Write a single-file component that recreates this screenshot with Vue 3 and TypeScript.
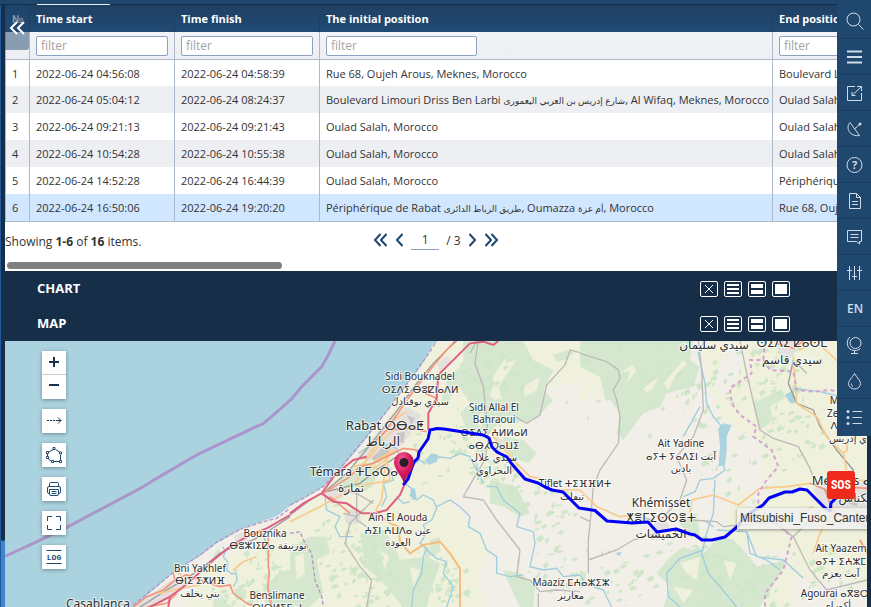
<script setup lang="ts">
import { ref } from 'vue'

interface Trip { start: string; finish: string; from: string; to: string }
interface Shape { k: string; d: string }
interface Sheet { x: number; shapes: Shape[] }
interface Label { x: number; y: number; s: string; t: string }

const trips: Trip[] = [
  { start: '2022-06-24 04:56:08', finish: '2022-06-24 04:58:39', from: 'Rue 68, Oujeh Arous, Meknes, Morocco', to: 'Boulevard Limouri Driss Ben Larbi, Meknes, Morocco' },
  { start: '2022-06-24 05:04:12', finish: '2022-06-24 08:24:37', from: 'Boulevard Limouri Driss Ben Larbi شارع إدريس بن العربي اليعمورى, Al Wifaq, Meknes, Morocco', to: 'Oulad Salah, Morocco' },
  { start: '2022-06-24 09:21:13', finish: '2022-06-24 09:21:43', from: 'Oulad Salah, Morocco', to: 'Oulad Salah, Morocco' },
  { start: '2022-06-24 10:54:28', finish: '2022-06-24 10:55:38', from: 'Oulad Salah, Morocco', to: 'Oulad Salah, Morocco' },
  { start: '2022-06-24 14:52:28', finish: '2022-06-24 16:44:39', from: 'Oulad Salah, Morocco', to: 'Périphérique de Rabat, Oumazza, Morocco' },
  { start: '2022-06-24 16:50:06', finish: '2022-06-24 19:20:20', from: 'Périphérique de Rabat طريق الرباط الدائرى, Oumazza أم عزة, Morocco', to: 'Rue 68, Oujeh Arous, Meknes, Morocco' },
]
const columns = ['Time start', 'Time finish', 'The initial position', 'End position']
const selected = ref(5)
const page = ref('1')
const panels = ['CHART', 'MAP']

// Odd parts are the Arabic runs, which are set in a smaller size.
const runs = (text: string): string[] => text.split(/([\u0600-\u06ff]+(?: [\u0600-\u06ff]+)*)/)

// Each map sheet covers 290 px and is digitised at three units per pixel.
const sheets: Sheet[] = [
  { x: 0, shapes: [
    { k: 'farm', d: 'M610 690L700 640L790 590L870 540V801H560Z' },
    { k: 'wood', d: 'M640 780L665 765L680 790L700 801H640ZM700 760L720 740L740 752L735 775L710 782ZM790 735L825 715L840 695L870 690V801H800L790 770ZM640 645L655 625L665 640L650 660ZM730 640L745 625L750 645L738 655Z' },
    { k: 'town', d: 'M400 801L450 765L500 730L540 705L560 725L530 760L480 790L450 801ZM700 590L730 575L745 600L715 615Z' },
    { k: 'river', d: 'M668 620L676 634L670 650L684 668L680 690L695 702L708 700L712 720L700 740M790 590L798 605' },
    { k: 'rail', d: 'M420 801L500 750L560 715L610 680L660 640L700 620L760 600L810 570L870 530' },
    { k: 'primary', d: 'M400 801L440 770L490 750L525 720L560 704L600 720L660 740L690 735L700 760L740 790L770 801M805 580V680L808 700L803 740L815 801M440 801L500 790L530 760M525 720L520 700' },
    { k: 'secondary', d: 'M480 760L540 745L600 735M700 690L730 665L770 650M520 690L545 705' },
    { k: 'motor', d: 'M450 801L510 770L545 745L580 715L640 660L690 620L740 590L800 565L870 525M510 770L505 801' },
    { k: 'border', d: 'M400 795L470 738L520 697L600 645L650 607L720 568L790 545L830 535L870 505' },
    { k: 'mark', d: 'M0 655L17 648L100 610L200 562L425 443L465 418L590 345L650 316L775 257L790 251L860 190L870 180' },
  ] },
  { x: 290, shapes: [
    { k: 'farm', d: 'M0 535L100 455L250 290L380 110L430 10H870V120L760 150L690 240L760 300L650 400L600 520L690 640L670 801H0Z' },
    { k: 'beige', d: 'M540 410L570 440L640 500L700 560L690 620L730 690L700 740L730 801H590L560 700L600 640L560 560L480 500ZM700 240L760 210L820 160L870 170V430L780 400L720 380Z' },
    { k: 'wood', d: 'M520 3H700L730 60L790 90L760 150L790 180L740 235L680 250L640 230L600 280L540 290L510 220L540 190L500 130L480 180L450 200L470 120L520 70ZM640 290L700 300L740 340L715 370L670 355L640 330ZM600 420L680 440L720 520L690 530L640 500L600 490ZM790 45L835 30L840 55L800 65ZM215 370L255 365L265 400L245 440L215 460L190 440L150 465L120 440L165 400ZM0 620L60 590L110 590L120 640L80 660L100 760L60 801H0ZM210 580L280 570L310 610L330 660L410 650L450 670L430 730L410 801H340L280 730L225 680ZM420 600L450 590L450 635L425 650ZM640 690L690 700L735 735L730 801H690L660 740ZM400 620L440 625L410 660Z' },
    { k: 'clear', d: 'M610 110L650 50L660 20L645 70L680 60L625 140L640 190L600 170ZM550 240L580 215L575 265ZM700 140L750 110L740 150L705 170ZM15 650L40 640L45 700L20 720ZM270 630L300 650L285 690ZM360 680L390 690L370 740Z' },
    { k: 'town', d: 'M200 355L245 300L290 240L350 200L395 225L360 285L310 345L260 365ZM90 460L140 430L180 455L140 485ZM440 70L475 45L485 65L450 95ZM160 520L205 505L215 545L175 550ZM610 285L640 300L625 330Z' },
    { k: 'citygrey', d: 'M245 355L285 315L300 335L265 370ZM320 280L345 275L340 310L325 305ZM350 225L375 235L365 255Z' },
    { k: 'lake', d: 'M405 360L425 340L445 345L440 365L415 375ZM360 450L375 445L380 475L368 480ZM515 280L530 285L520 300Z' },
    { k: 'river', d: 'M205 340L250 310L290 315L320 325L330 350L325 380L345 430L370 450L360 465L380 480L400 465L430 480L440 505L425 540L400 555L410 580L390 610L410 625L400 650L395 700L370 750L365 801M375 370L390 360L405 370M445 350L480 355L510 340L540 350L560 390L580 430M440 500L480 480L510 500L540 530L535 560L570 580L590 630L620 650L620 700L660 710L700 705M590 440L620 440L640 480L690 520L680 560L730 575L735 610L720 680L760 690L800 685L820 710L870 705M280 380L300 385L310 420L280 430L290 470L275 500M105 470L110 510L150 530L135 560L150 590L190 590M410 630L440 655L470 665L460 700L490 740L470 801M320 470L340 490L360 485M560 370L565 420' },
    { k: 'rail', d: 'M0 525L60 480L110 450L170 400L220 340L260 290L330 200L380 130L430 70L480 20L500 3M110 455L210 430L260 390L320 350' },
    { k: 'minor', d: 'M565 3L555 70L580 140L595 290M870 38L840 30L825 75L770 135L750 225L710 250L675 230M595 295L585 360L560 400L520 470L580 480L620 540L690 630L680 710L720 720L750 755L800 750L870 755M250 480L180 550L165 610L210 680L245 720L230 801M140 450L200 460L250 490M200 460L200 540L230 560M745 801V760M160 520L200 530M560 3L540 40' },
    { k: 'secondary', d: 'M0 545L90 500L180 450L215 400L260 360L315 330M200 440L300 420L290 360L310 300M290 340L275 480L258 510L275 530L300 550M610 290L640 325L680 370L720 410L750 415M800 450L870 450M190 400L240 350L280 300L340 240M210 390L260 380L300 350M190 380L230 370M225 360L310 240L350 215' },
    { k: 'trunk', d: 'M300 550L325 560L330 605L360 640L400 615L450 605L480 640L510 685V801' },
    { k: 'primary', d: 'M100 460L180 410L210 380L250 370L300 345L340 325L380 330L390 350M120 470L180 520M240 320L290 270L330 210L380 140L440 65L470 30L495 3M290 270L360 265L410 275M405 160L440 175L445 200' },
    { k: 'motor', d: 'M0 520L40 490L95 460L135 405L190 360L230 350M95 460L130 485L170 490L215 520L255 520L290 510L330 465L345 430M415 270L415 220L440 175L445 105L470 80L540 10L580 5L610 15L625 3' },
    { k: 'border', d: 'M0 495L40 475L100 440L150 385L200 325L250 265L300 200L340 145L380 90L410 50L440 3' },
    { k: 'border', d: 'M0 580L30 575L45 610L65 640L75 720L95 770L100 801' },
    { k: 'mark', d: 'M0 182L35 140L95 80L115 45L135 3' },
  ] },
  { x: 580, shapes: [
    { k: 'beige', d: 'M0 150L50 120L140 290L220 60L300 20L350 130L370 240L400 600L330 700L260 801H0Z' },
    { k: 'farm', d: 'M370 3H861V801H560L500 760L640 640L430 610L450 480L540 420L560 320L440 250L380 120Z' },
    { k: 'beige', d: 'M440 20L500 30L470 120L430 170L400 120ZM500 430L590 410L560 480L500 500ZM640 720L760 700L861 740V801H650Z' },
    { k: 'wood', d: 'M0 3H340L330 60L360 80L340 140L260 160L240 200L190 220L130 300L110 280L120 220L90 180L50 190L60 120L0 80ZM520 190L600 150L620 170L570 200L580 240L540 270ZM270 650L310 620L370 640L420 590L460 600L500 640L530 680L620 660L590 720L540 801H250L270 740L230 700ZM0 690L20 700L10 740L0 740ZM290 540L350 520L360 590L330 590ZM800 230L830 220L820 250Z' },
    { k: 'clear', d: 'M0 80L60 110L80 190L30 170L0 190ZM120 100L155 75L170 90L140 130L150 90ZM190 145L235 110L220 145L200 160ZM250 130L310 60L320 75L290 100L265 150ZM300 670L360 650L350 720L320 700ZM430 660L470 670L450 720ZM280 740L340 750L310 790Z' },
    { k: 'town', d: 'M700 450L740 420L861 430V530L800 510L730 500ZM220 545L250 535L270 560L235 580ZM590 3H650L640 50L610 60ZM790 100L805 110L795 120Z' },
    { k: 'citygrey', d: 'M730 450L760 440L750 480ZM800 470L840 470L830 500L805 490Z' },
    { k: 'lake', d: 'M415 265L430 250L455 255L440 290L440 330L435 375L415 380L420 320ZM105 640L125 635L120 648ZM615 165L640 150L645 190L630 190Z' },
    { k: 'river', d: 'M372 3L355 40L375 130L380 190L400 230L430 265M360 200L310 290M430 375L435 390L400 415L360 420L345 455L310 470M405 420L400 520L380 580L365 640L385 700L420 740L470 801M410 570L500 575L530 650L610 660L670 715M500 575L510 640L560 660L600 690M640 145L720 155L760 165L800 170L861 215M370 630L300 655L260 700L265 770L300 801M40 740L70 750L95 801M400 560L370 540M0 705L20 735' },
    { k: 'minor', d: 'M0 40L80 65L115 90L120 115L100 150L110 180L120 230L115 310L60 390L40 440L35 500L25 600V700M480 3L500 100L540 270L580 295L655 320L690 385L710 440M355 3L365 90L370 210L340 290L290 350L320 420L300 480L250 530M330 540L410 545L430 560L580 545L640 590L690 690L740 750L861 720M25 660L110 630L160 600L260 570M0 530L30 545M640 60L680 100M820 390L815 440M640 590L700 530L735 500M170 530L220 540' },
    { k: 'rail', d: 'M640 60L625 130L650 190L700 210L720 260L770 330L820 390V430' },
    { k: 'secondary', d: 'M0 450L50 500L120 530L210 520L250 540M330 520L335 480L400 465L475 495L540 445L620 440L690 430M650 190L710 230L740 290L790 340L800 390M790 340L802 330L800 310M640 50L650 190M640 3L660 30L700 5M720 15L770 60L830 90M700 430L861 420M760 520L740 545L720 580L700 640M700 500L650 520' },
    { k: 'primary', d: 'M690 430L740 450L780 440L861 445M735 450L750 490L765 520L861 560M840 600L861 640M590 10L640 25L670 3' },
    { k: 'bound', d: 'M555 3L550 60L510 60L515 100L450 145L455 190L480 225L530 260L520 290L575 330L595 380L560 420L535 460V490L560 530L600 560L635 590L610 690L555 760V801M550 60L570 90L640 95L650 150L700 155L750 150L840 170' },
  ] },
]

// Small vegetation spots around [x, y, spread, count].
const clusters: number[][] = [
  [265, 570, 22, 22], [345, 540, 40, 45], [365, 580, 45, 60], [440, 580, 30, 40], [500, 470, 32, 35],
  [540, 510, 40, 35], [555, 565, 45, 30], [700, 395, 40, 35], [770, 375, 40, 40], [790, 430, 45, 35],
  [700, 570, 45, 60], [750, 585, 45, 55], [620, 580, 50, 30], [630, 380, 70, 45], [490, 390, 50, 40],
  [450, 450, 40, 30], [825, 570, 35, 20], [730, 470, 40, 20], [240, 590, 30, 22],
]
let seed = 17
const rnd = () => (seed = (seed * 16807) % 2147483647) / 2147483647
const specks = clusters.map(([cx, cy, r, n]) => {
  let d = ''
  for (let i = 0; i < n; i++) {
    const x = cx + (rnd() + rnd() - 1) * r
    const y = cy + (rnd() + rnd() - 1) * r
    const w = 1 + rnd() * 5
    const h = 1 + rnd() * 3
    d += `M${x.toFixed(1)} ${y.toFixed(1)}l${w.toFixed(1)} ${(-h).toFixed(1)}l${(w / 2).toFixed(1)} ${h.toFixed(1)}l${(-w).toFixed(1)} ${h.toFixed(1)}z`
  }
  return d
})

const labels: Label[] = [
  { x: 420, y: 380, s: 's', t: 'Sidi Bouknadel' }, { x: 420, y: 393, s: 's', t: 'ⵙⵉⴷⵉ ⴱⵓⵇⵏⴰⴷⵍ' }, { x: 420, y: 405, s: 's', t: 'سيدي بوقنادل' },
  { x: 385, y: 430, s: 'l', t: 'Rabat ⵔⴱⴰⵟ' }, { x: 383, y: 446, s: 'l', t: 'الرباط' },
  { x: 354, y: 476, s: 'm', t: 'Témara ⵜⵎⴰⵔⴰ' }, { x: 351, y: 492, s: 'm', t: 'تمارة' },
  { x: 398, y: 521, s: 's', t: 'Ain El Aouda' }, { x: 398, y: 534, s: 's', t: 'ⵄⵉⵏ ⵄⵡⴷⴰ عين' }, { x: 398, y: 546, s: 's', t: 'العودة' },
  { x: 494, y: 411, s: 's', t: 'Sidi Allal El' }, { x: 494, y: 423, s: 's', t: 'Bahraoui' }, { x: 494, y: 436, s: 's', t: 'ⵙⵉⴷⵉ ⵄⵍⵍⴰⵍ' }, { x: 494, y: 449, s: 's', t: 'ⴰⴱⵃⵔⴰⵡⵉ' }, { x: 494, y: 461, s: 's', t: 'سيدي علال' }, { x: 494, y: 474, s: 's', t: 'البحراوي' },
  { x: 575, y: 487, s: 's', t: 'Tiflet ⵜⵉⴼⴼⵍⵜ' }, { x: 572, y: 500, s: 's', t: 'تيفلت' },
  { x: 265, y: 537, s: 's', t: 'Bouznika' }, { x: 268, y: 549, s: 's', t: 'ⴱⵓⵣⵏⵉⵇⴰ بوزنيقة' },
  { x: 200, y: 572, s: 's', t: 'Bni Yakhlef' }, { x: 200, y: 584, s: 's', t: 'ⴱⵏⵉ ⵉⵅⵍⴼ' }, { x: 200, y: 597, s: 's', t: 'بني يخلف' },
  { x: 277, y: 599, s: 's', t: 'Benslimane' }, { x: 277, y: 611, s: 's', t: 'ⴱⵏⵙⵍⵉⵎⴰⵏ' },
  { x: 98, y: 608, s: 'm', t: 'Casablanca' },
  { x: 661, y: 507, s: 'm', t: 'Khémisset' }, { x: 661, y: 522, s: 'm', t: 'ⵅⴻⵎⵉⵙⵙⴻⵜ' }, { x: 661, y: 538, s: 'm', t: 'الخميسات' },
  { x: 681, y: 447, s: 's', t: 'Ait Yadine' }, { x: 681, y: 460, s: 's', t: 'ⴰⵢⵜ ⵢⴰⴷⵉⵏ آيت' }, { x: 681, y: 472, s: 's', t: 'يادين' },
  { x: 571, y: 586, s: 's', t: 'Maaziz ⵎⵄⴰⵣⵉⵣ' }, { x: 571, y: 599, s: 's', t: 'معازيز' },
  { x: 714, y: 349, s: 'm', t: 'سيدي سليمان' }, { x: 792, y: 347, s: 'm', t: 'ⵙⵉⴷⵉ ⵇⴰⵙⵎ' }, { x: 792, y: 364, s: 'm', t: 'سيدي قاسم' },
  { x: 847, y: 404, s: 's', t: 'Moulay' }, { x: 847, y: 417, s: 's', t: 'Zerhoun' }, { x: 846, y: 429, s: 's', t: 'ⴷⵔⵉⵙ' }, { x: 856, y: 442, s: 's', t: 'مولاي إدريس' },
  { x: 850, y: 485, s: 'l', t: 'Meknès ⴰⵎⴽ' }, { x: 856, y: 502, s: 'm', t: 'مكناس' },
  { x: 841, y: 552, s: 's', t: 'Ait Yaazem' }, { x: 841, y: 565, s: 's', t: 'ⴰⵢⵜ ⵉⵄⵣⵎ' }, { x: 841, y: 577, s: 's', t: 'آيت يعزم' },
  { x: 838, y: 597, s: 's', t: 'Agourai ⴰⴳⵓⵔⴰ' }, { x: 837, y: 609, s: 's', t: 'أكوراي' },
]

const route = 'M404 484L408 479L411 470L414 462L418 458L419 452L428 439L430 430L437 428.500L444 429L483 435L489 438L492 447L497 452L507 457L511 463L525 479L538 483L545 487L552 490L563 492L568 497L579 508L595 510.500L607 521L632 523L648 522L657 532L676 529L690 534L695 535L702 540L712 540L725 537L738 526L745 516L763 505L769 498L785 492L792 492L800 489L807 490L825 508L830 511L831 503L836 498'

const menu: { name: string; d: string }[] = [
  { name: 'Search', d: 'M7.500 1a6.500 6.500 0 1 0 0 13a6.500 6.500 0 0 0 0-13zM12.500 12.500L17.500 17.500' },
  { name: 'Menu', d: 'M1 3.500H16M1 9H16M1 14.500H16' },
  { name: 'Open', d: 'M9 2.500H1.500V16.500H15.500V9M11 2.500H15.500V7M15.500 2.500L6 11.500M6 8V11.500H9.500' },
  { name: 'Tracking', d: 'M4 2.500C-1 8 4 17 13.500 15.500L4 2.500zM8.500 9L14 4' },
  { name: 'Help', d: 'M8.500 1.500a7.500 7.500 0 1 0 0 15a7.500 7.500 0 0 0 0-15z' },
  { name: 'Reports', d: 'M3.500 1.500H10.500L14.500 5.500V16.500H3.500zM10.500 1.500V5.500H14.500M6 9.500H12M6 12.500H12' },
  { name: 'Messages', d: 'M1.500 2.500H15.500V13.500H13.500V16L10.500 13.500H1.500zM4.500 6.500H12.500M4.500 9.500H12.500' },
  { name: 'Settings', d: 'M3.500 2V16M8.500 2V16M13.500 2V16M1 6.500H6M6 12.500H11M11 6.500H16' },
  { name: 'EN', d: '' },
  { name: 'Globe', d: 'M9.500 1.500a5.500 5.500 0 1 0 0 11a5.500 5.500 0 0 0 0-11zM4 1C-1 5 1 14.500 8.500 14.500C11 14.500 13 14 14.500 12.500M8.500 14.500V17.500M5 17.500H12' },
  { name: 'Fuel', d: 'M8.500 1.500C6 6 2.500 8.500 2.500 11.500a6 5.500 0 0 0 12 0C14.500 8.500 11 6 8.500 1.500zM5.500 11.500C5.500 13 6 14 7 14.500' },
  { name: 'List', d: 'M6.500 3.500H16M6.500 9.500H16M6.500 15.500H16' },
]
const tools: { name: string; d: string }[] = [
  { name: 'Ruler', d: '' },
  { name: 'Polygon', d: 'M3 6.500L8 3.500M10.500 3.500L14.500 6M15.500 9V14.500M14 15.500H9M6 15L3 12.500M2.500 7.500V10M8 1.500h2v2h-2zM14.500 6h2v2h-2zM14.500 14.500h2v2h-2zM6.500 14.500h2v2h-2zM1.500 10.500h2v2h-2zM1.500 5.500h2v2h-2z' },
  { name: 'Print', d: 'M4.500 6.500V3.500Q4.500 2.500 5.500 2.500H12.500Q13.500 2.500 13.500 3.500V6.500M4 13.500Q2.500 13.500 2.500 12V8Q2.500 6.500 4 6.500H14Q15.500 6.500 15.500 8V12Q15.500 13.500 14 13.500M4.500 9.500H13.500V14Q13.500 15.500 12 15.500H6Q4.500 15.500 4.500 14zM6.500 11.500H11.500M6.500 13.500H11.500' },
  { name: 'Full screen', d: 'M2.500 7V2.500H7M11 2.500H15.500V7M15.500 11V15.500H11M7 15.500H2.500V11' },
  { name: 'Log', d: 'M1.500 2.500H16.500M1.500 15.500H16.500' },
]
</script>

<template>
  <div class="app">
    <div class="topbar"><span class="tab-mark"></span></div>
    <div class="body">
      <div class="gutter"><span class="gutter-thumb"></span></div>
      <main class="main">
        <section class="grid">
          <table>
            <colgroup><col class="c-num" /><col class="c-time" /><col class="c-time" /><col class="c-pos" /><col class="c-pos" /></colgroup>
            <thead>
              <tr><th class="num">№</th><th v-for="c in columns" :key="c">{{ c }}</th></tr>
              <tr class="filters">
                <td></td>
                <td v-for="(c, i) in columns" :key="c"><input type="text" placeholder="filter" :aria-label="c" :class="{ wide: i > 1 }" /></td>
              </tr>
            </thead>
            <tbody>
              <tr v-for="(t, i) in trips" :key="t.start" :class="{ picked: i === selected }" @click="selected = i">
                <td>{{ i + 1 }}</td><td>{{ t.start }}</td><td>{{ t.finish }}</td>
                <td><template v-for="(r, n) in runs(t.from)" :key="n"><bdi v-if="n % 2">{{ r }}</bdi><template v-else>{{ r }}</template></template></td>
                <td>{{ t.to }}</td>
              </tr>
            </tbody>
          </table>
          <button class="collapse" aria-label="Collapse">
            <svg width="18" height="14" viewBox="0 0 18 14"><path d="M9 1L3 7L9 13M16 1L10 7L16 13" /></svg>
          </button>
        </section>

        <div class="pager">
          <span>Showing <b>1-6</b> of <b>16</b> items.</span>
          <nav class="pages">
            <button aria-label="First page"><svg width="15" height="14" viewBox="0 0 15 14"><path d="M7.500 1L2 7L7.500 13M13.500 1L8 7L13.500 13" /></svg></button>
            <button aria-label="Previous page"><svg width="9" height="14" viewBox="0 0 9 14"><path d="M7.500 1L2 7L7.500 13" /></svg></button>
            <input v-model="page" type="text" aria-label="Page" />
            <span>/ 3</span>
            <button aria-label="Next page"><svg width="9" height="14" viewBox="0 0 9 14"><path d="M1.500 1L7 7L1.500 13" /></svg></button>
            <button aria-label="Last page"><svg width="15" height="14" viewBox="0 0 15 14"><path d="M1.500 1L7 7L1.500 13M7.500 1L13 7L7.500 13" /></svg></button>
          </nav>
        </div>
        <div class="scroll"><span class="scroll-thumb"></span></div>

        <header v-for="p in panels" :key="p" class="panel">
          <h2>{{ p }}</h2>
          <div class="sizes">
            <button :aria-label="`${p} close`"><svg width="16" height="14"><path class="line" d="M4 3L12 11M12 3L4 11" /></svg></button>
            <button :aria-label="`${p} small`"><svg width="16" height="14"><path d="M2 2H14V4H2zM2 6H14V8H2zM2 10H14V12H2z" /></svg></button>
            <button :aria-label="`${p} half`"><svg width="16" height="14"><path d="M2 2H14V6H2zM2 8H14V12H2z" /></svg></button>
            <button :aria-label="`${p} full`"><svg width="16" height="14"><path d="M2 2H14V12H2z" /></svg></button>
          </div>
        </header>

        <section class="map">
          <svg class="chart" viewBox="5 341 862 266" preserveAspectRatio="xMinYMin slice">
            <defs>
              <radialGradient id="pin" cx=".4" cy=".25" r=".8"><stop offset="0" stop-color="#f4609a" /><stop offset=".5" stop-color="#d81b60" /><stop offset="1" stop-color="#9c0f45" /></radialGradient>
            </defs>
            <path class="land" d="M133 607L157 587L173 573L200 556L217 543L240 530L260 522L277 516L290 506L303 499L323 487L340 470L357 450L373 430L390 408L403 390L417 372L427 357L437 341H867V607Z" />
            <g v-for="s in sheets" :key="s.x" :transform="`translate(${s.x} 340) scale(.33333)`">
              <path v-for="(p, i) in s.shapes.slice(0, s.x ? 4 : 2)" :key="i" :class="p.k" :d="p.d" />
            </g>
            <path v-for="(d, i) in specks" :key="i" class="speck" :d="d" />
            <g v-for="s in sheets" :key="`l${s.x}`" :transform="`translate(${s.x} 340) scale(.33333)`">
              <path v-for="(p, i) in s.shapes.slice(s.x ? 4 : 2)" :key="i" :class="p.k" :d="p.d" />
            </g>
            <text v-for="l in labels" :key="`${l.x}-${l.y}`" :class="['label', l.s]" :x="l.x" :y="l.y">{{ l.t }}</text>
            <path class="route" :d="route" />
            <path class="pin" d="M404 484C403 477 394 470 394 462a10 10 0 0 1 20 0C414 470 405 477 404 484z" />
            <circle class="hole" cx="404" cy="462.500" r="4.500" />
          </svg>

          <div class="tools">
            <div class="zoom">
              <button aria-label="Zoom in"><svg width="18" height="18"><path class="bold" d="M9 3V13M4 8H14" /></svg></button>
              <button aria-label="Zoom out"><svg width="18" height="18"><path class="bold" d="M4 7H14" /></svg></button>
            </div>
            <button v-for="t in tools" :key="t.name" :aria-label="t.name">
              <svg width="18" height="18">
                <path v-if="t.d" :d="t.d" />
                <g v-else><path class="dark" d="M2 8.500H13" stroke-dasharray="2 1" /><path class="dark" d="M13 5.500L16 8.500L13 11.500M12 8.500H16" /></g>
                <text v-if="t.name === 'Log'" x="9" y="12" class="log">LOG</text>
              </svg>
            </button>
          </div>

          <span class="tip">Mitsubishi_Fuso_Canter</span>
          <span class="sos">SOS</span>
        </section>
      </main>
    </div>

    <aside class="side">
      <button v-for="m in menu" :key="m.name" :aria-label="m.name">
        <span v-if="!m.d">{{ m.name }}</span>
        <svg v-else width="18" height="18" :class="{ thick: m.name === 'Menu' }">
          <path :d="m.d" />
          <text v-if="m.name === 'Help'" x="8.500" y="13" class="ask">?</text>
          <circle v-if="m.name === 'Tracking'" cx="14" cy="4" r="1.500" />
          <g v-if="m.name === 'List'"><circle cx="2" cy="3.500" r="1.500" /><circle cx="2" cy="9.500" r="1.500" /><circle cx="2" cy="15.500" r="1.500" /></g>
        </svg>
      </button>
    </aside>
  </div>
</template>

<style>
body { background: #162e48; }
</style>

<style scoped>
* { box-sizing: border-box; }
button { padding: 0; border: 0; background: none; font: inherit; cursor: pointer; }
svg { display: block; fill: none; }
.app { position: relative; display: flex; flex-direction: column; height: 100vh; overflow: hidden; font-family: "Open Sans", "DejaVu Sans", sans-serif; font-size: 11px; color: #333; }
.topbar { flex: none; height: 5px; padding-left: 37px; background: #20486f; border-bottom: 1px solid #162e48; }
.tab-mark { display: block; width: 73px; height: 5px; border-bottom: 1px solid #e9edf1; }
.body { flex: 1; display: flex; min-height: 0; padding-right: 4px; }
.gutter { flex: none; width: 5px; background: #3f86cd; border-left: 1px solid #22599a; }
.gutter-thumb { display: block; height: 89%; background: #162e48; border-radius: 0 0 2px 2px; }
.main { flex: 1; min-width: 0; display: flex; flex-direction: column; background: #fff; }

.grid { position: relative; flex: none; overflow: hidden; }
table { table-layout: fixed; width: 1220px; border-collapse: separate; border-spacing: 0; border-bottom: 1px solid #abb9ca; }
.c-num { width: 24px; }
.c-time { width: 145px; }
.c-pos { width: 453px; }
th, td { height: 27px; padding: 0 6px; border-left: 1px solid #abb9ca; text-align: left; white-space: nowrap; overflow: hidden; }
th { background: linear-gradient(#1f4063, #214a74); border-color: #1e4063; color: #fff; font-weight: 700; }
.num { color: #dfe5ec; }
.filters td { height: 28px; border-bottom: 1px solid #abb9ca; background: linear-gradient(#f3f4f7, #edeef3); }
.filters input { display: block; width: 132px; height: 20px; padding: 0 4px; border: 1px solid #8ba2c0; border-radius: 2px; background: #fff; font: 12px "Open Sans", sans-serif; outline: 0; }
.filters input.wide { width: 151px; }
input::placeholder { color: #a3a3a3; opacity: 1; }
tbody tr:first-child td { height: 26px; }
tbody tr:nth-child(even) td { background: #eeeff3; }
tbody tr.picked td { background: #d1e7ff; }
bdi { font-size: 9px; line-height: 9px; }
.collapse { position: absolute; left: 0; top: 0; display: flex; align-items: center; justify-content: center; width: 24px; height: 45px; background: rgba(32, 72, 111, .5); border-radius: 0 0 3px 0; }
.collapse path { stroke: #fff; stroke-width: 2; }

.pager { flex: none; display: grid; grid-template-columns: 1fr auto 1fr; align-items: center; height: 38px; font-size: 12px; }
.pages { display: flex; align-items: center; gap: 7px; padding-bottom: 2px; }
.pages path { stroke: #20486f; stroke-width: 2; }
.pages input { width: 28px; height: 20px; padding: 0; border: 0; border-bottom: 1px solid #8ba2c0; text-align: center; font: 12px "Open Sans", sans-serif; color: #333; outline: 0; }
.scroll { flex: none; height: 11px; padding: 2px; }
.scroll-thumb { display: block; width: 32%; height: 7px; border-radius: 4px; background: #808080; }

.panel { flex: none; display: flex; align-items: center; justify-content: space-between; height: 35px; padding: 0 77px 0 32px; background: #162e48; color: #fff; }
.panel h2 { margin: 0; padding-bottom: 2px; font-size: 13px; font-weight: 700; }
.sizes { display: flex; gap: 6px; }
.sizes button { width: 18px; height: 16px; border: 1px solid #fff; border-radius: 2px; }
.sizes path { fill: #fff; }
.sizes .line { fill: none; stroke: #fff; }

.map { position: relative; flex: 1; min-height: 0; overflow: hidden; background: #aad3df; }
.chart { width: 100%; height: 100%; }
.land { fill: #f2efe9; }
.farm { fill: #eff1dc; }
.beige { fill: #f2efe9; }
.wood { fill: #d5e8cf; }
.clear { fill: #eff0de; }
.speck { fill: #d0e6c8; }
.town { fill: #e4e0dd; }
.citygrey { fill: #c8c6c4; }
.lake { fill: #aad3df; }
.river { stroke: #a0cddd; stroke-width: 4; }
.rail { stroke: #9a9a98; stroke-width: 4; }
.minor { stroke: #bcbab8; stroke-width: 4; }
.secondary { stroke: #f8ca8c; stroke-width: 5; }
.trunk { stroke: #f6bd7c; stroke-width: 6; }
.primary { stroke: #f5947a; stroke-width: 5; }
.motor { stroke: #e0607f; stroke-width: 6; }
.border { stroke: #b493c9; stroke-width: 4; stroke-dasharray: 12 6; }
.bound { stroke: #d5a3d3; stroke-width: 6; stroke-dasharray: 12 10; }
.mark { stroke: #aa96cb; stroke-width: 9; }
.label { fill: #2f2f2f; stroke: rgba(255, 255, 255, .7); stroke-width: 2px; paint-order: stroke; text-anchor: middle; font-family: "Noto Sans", "DejaVu Sans", sans-serif; }
.s { font-size: 10px; }
.m { font-size: 12px; }
.l { font-size: 13px; }
.route { stroke: #0000f5; stroke-width: 3px; stroke-linejoin: round; stroke-linecap: round; }
.pin { fill: url(#pin); }
.hole { fill: #2b1f24; }

.tools { position: absolute; left: 37px; top: 10px; display: flex; flex-direction: column; gap: 10px; }
.tools button { display: flex; align-items: center; justify-content: center; width: 24px; height: 24px; background: #fff; box-shadow: 0 1px 4px rgba(0, 0, 0, .35); }
.zoom { display: flex; flex-direction: column; box-shadow: 0 1px 4px rgba(0, 0, 0, .35); }
.tools .zoom button { box-shadow: none; }
.tools .zoom button:first-child { border-bottom: 1px solid #ccc; }
.tools path { stroke: #20486f; }
.tools .dark { stroke: #162e48; }
.tools .bold { stroke: #1a3350; stroke-width: 2; }
.log { fill: #20486f; font: 700 8px "Liberation Mono", monospace; text-anchor: middle; }
.tip { position: absolute; left: 732px; top: 167px; height: 21px; padding: 0 3px; background: rgba(240, 240, 240, .85); box-shadow: 0 1px 3px rgba(0, 0, 0, .4); font: 12px/20px "Liberation Sans", sans-serif; white-space: nowrap; }
.sos { position: absolute; left: 822px; top: 130px; width: 28px; height: 28px; border-radius: 3px; background: #ee2a1c; color: #fff; font: 700 12px/28px "Roboto Condensed", Roboto, sans-serif; text-align: center; }

.side { position: absolute; right: 0; top: 0; display: flex; flex-direction: column; width: 34px; padding: 3px 0 1px; background: #20486f; }
.side button { display: flex; align-items: center; justify-content: center; height: 36px; padding-left: 2px; border-bottom: 1px solid #1a3d61; color: #d2dce8; font-size: 12px; font-weight: 600; }
.side button:last-child { border-bottom: 0; }
.side svg { stroke: #d2dce8; }
.side .thick { stroke-width: 2; }
.side circle { fill: #d2dce8; stroke: none; }
.ask { fill: #d2dce8; stroke: none; font: 700 11px "Open Sans", sans-serif; text-anchor: middle; }
</style>
